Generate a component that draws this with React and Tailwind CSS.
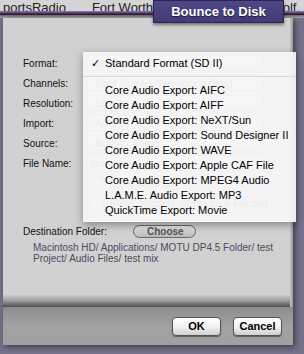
import React from "react";

const items = [
  "Core Audio Export: AIFC",
  "Core Audio Export: AIFF",
  "Core Audio Export: NeXT/Sun",
  "Core Audio Export: Sound Designer II",
  "Core Audio Export: WAVE",
  "Core Audio Export: Apple CAF File",
  "Core Audio Export: MPEG4 Audio",
  "L.A.M.E. Audio Export: MP3",
  "QuickTime Export: Movie",
];

function Label({ children }) {
  return <div className="w-[63px] shrink-0 text-[10px] text-[#111]">{children}</div>;
}

function Popup({ children }) {
  return (
    <div className="w-[178px] h-[16px] rounded-[4px] border border-[#9a9a9a] bg-gradient-to-b from-white to-[#dcdcdc] text-[11px] pl-[8px] leading-[14px] text-[#333]">
      {children}
    </div>
  );
}

export default function App() {
  return (
    <div
      className="relative w-[304px] h-[354px] overflow-hidden bg-[#76728b]"
      style={{ fontFamily: '"Liberation Sans", Arial, sans-serif' }}
    >
      {/* background window title strip */}
      <div className="h-[11px] bg-[#d4d4d4] overflow-hidden relative">
        <div className="flex gap-[26px] pl-[3px] text-[13px] text-[#222] leading-none mt-[1px]">
          <span>portsRadio</span>
          <span>Fort Worth</span>
        </div>
        <div className="absolute right-[4px] top-[1px] text-[13px] text-[#222] leading-none">olf.</div>
      </div>
      <div className="h-[4px] bg-gradient-to-b from-[#8c7cc4] via-[#5a3a70] to-[#24101e]" />
      <div className="h-[3px] bg-gradient-to-b from-[#6a6a6a] to-[#a8a8a8]" />

      {/* dialog */}
      <div className="ml-[3px] w-[290px] flex flex-col shadow-[2px_2px_6px_rgba(0,0,0,0.5)]">
        <div className="h-[289px] bg-[#d1d1d1] relative flex flex-col pl-[20px] pt-[35px]">
          <div className="flex flex-col">
            {[
              ["Format:", "Standard Format (SD II)"],
              ["Channels:", "Split Stereo (two mono files)"],
              ["Resolution:", "16 bit"],
              ["Import:", "Add..."],
              ["Source:", "Built-in Audio"],
            ].map(([l, v]) => (
              <div key={l} className="h-[20px] flex items-center">
                <Label>{l}</Label>
                <Popup>{v}</Popup>
              </div>
            ))}
            <div className="h-[20px] flex items-center">
              <Label>File Name:</Label>
              <div className="w-[178px] h-[16px] border border-[#999] bg-white text-[11px] pl-[3px] leading-[14px] text-[#333]">test mix</div>
            </div>
            <div className="h-[20px] flex items-center pl-[68px] gap-[6px] text-[11px] text-[#333]">
              <div className="w-[12px] h-[12px] border border-[#999] bg-white rounded-[2px]" />
              <span>Save settings</span>
            </div>
            <div className="h-[20px] flex items-center pl-[68px] gap-[6px] text-[11px] text-[#333]">
              <div className="w-[12px] h-[12px] border border-[#999] bg-white rounded-[2px]" />
              <span>Save settings as Bounce Format</span>
            </div>
          </div>
          <div className="mt-[11px] h-[14px] flex items-center">
            <div className="w-[110px] text-[10px] text-[#111]">Destination Folder:</div>
            <div className="w-[63px] h-[13px] rounded-full border border-[#6a6a6a] bg-gradient-to-b from-[#e8e8e8] to-[#b8b8b8] text-[10px] font-bold text-[#555] leading-[11px] pl-[13px]">
              Choose
            </div>
          </div>
          <div className="mt-[4px] pl-[10px] text-[10px] leading-[11px] text-[#4c4c5c]">
            Macintosh HD/ Applications/ MOTU DP4.5 Folder/ test
            <br />
            Project/ Audio Files/ test mix
          </div>
          <div className="absolute left-0 right-0 bottom-0 h-[12px] bg-gradient-to-b from-[#cacaca] via-[#9a9a9a] to-[#4e4e4e]" />
          <div className="absolute top-0 bottom-0 right-0 w-[3px] bg-gradient-to-r from-[#c4c4c4] to-[#9a9a9a]" />
        </div>
        <div className="h-[38px] bg-gradient-to-b from-[#8c8c8c] via-[#a2a2a2] to-[#a0a0a0] flex items-center justify-end gap-[12px] pr-[11px] pt-[1px]">
          <div className="w-[49px] h-[19px] rounded-[4px] border border-[#555] bg-gradient-to-b from-white via-[#f2f2f2] to-[#d0d0d0] shadow-[0_1px_1px_rgba(0,0,0,0.4)] flex items-center justify-center text-[11px] font-bold text-black">
            OK
          </div>
          <div className="w-[49px] h-[19px] rounded-[4px] border border-[#555] bg-gradient-to-b from-white via-[#f2f2f2] to-[#d0d0d0] shadow-[0_1px_1px_rgba(0,0,0,0.4)] flex items-center justify-center text-[11px] font-bold text-black">
            Cancel
          </div>
        </div>
      </div>

      {/* Bounce to Disk title label */}
      <div className="absolute left-[153px] top-0 w-[131px] h-[23px] bg-gradient-to-b from-[#4e4786] to-[#423b78] border border-[#2a2450] shadow-[0_2px_3px_rgba(0,0,0,0.45)] flex items-center justify-center">
        <span className="text-[13px] font-bold text-white [text-shadow:0_1px_1px_rgba(0,0,0,0.6)]">Bounce to Disk</span>
      </div>

      {/* popup menu */}
      <div className="absolute left-[83px] top-[52px] w-[213px] bg-[#f5f5f5]/[0.95] shadow-[0_3px_8px_rgba(0,0,0,0.35)] pt-[4px] pb-[4px] text-[11px] text-black">
        <div className="h-[15px] flex items-center relative pl-[22px]">
          <span className="absolute left-[8px] text-[11px]">✓</span>
          Standard Format (SD II)
        </div>
        <div className="h-[12px] flex items-start pt-[5px]">
          <div className="w-full h-px bg-[#d8d8d8]" />
        </div>
        {items.map((t) => (
          <div key={t} className="h-[15px] flex items-center pl-[22px]">
            {t}
          </div>
        ))}
      </div>
    </div>
  );
}
